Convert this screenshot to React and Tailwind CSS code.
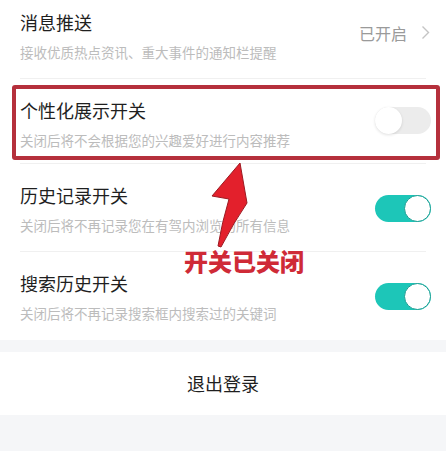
import React from 'react';

const font = { fontFamily: '"Noto Sans CJK SC", "Noto Sans", sans-serif' };

const Toggle = ({ on }) => (
  <div
    className={`relative h-[27px] w-[56px] shrink-0 rounded-full ${on ? 'bg-[#1dc6b8]' : 'bg-[#ececec]'}`}
  >
    <div
      className={`absolute top-0 h-[27px] w-[27px] rounded-full bg-white ${
        on ? 'right-0 border border-[#1a9e93]' : 'left-0 shadow-[0_1px_3px_rgba(0,0,0,0.12)]'
      }`}
    />
  </div>
);

const Row = ({ title, desc, right, className = '', divider = true }) => (
  <div className={`flex flex-col ${className}`}>
    <div className="flex items-center pl-5 pr-[15px]">
      <div className="flex-1">
        <div className="text-[18px] leading-[24px] text-[#1f1f1f]">{title}</div>
        <div className="mt-[9px] text-[13.5px] leading-[18px] text-[#bcbcbc]">{desc}</div>
      </div>
      {right}
    </div>
    {divider && <div className="mx-5 mt-auto h-px bg-[#f0f0f0]" />}
  </div>
);

export default function App() {
  return (
    <div className="relative h-[451px] w-full overflow-hidden bg-[#f5f6f8]" style={font}>
      <div className="bg-white">
        <Row
          className="h-[79px] pt-[10px]"
          title="消息推送"
          desc="接收优质热点资讯、重大事件的通知栏提醒"
          right={
            <div className="-mt-[6px] flex items-center gap-[14px] pr-[1px]">
              <span className="text-[16px] text-[#9a9a9a]">已开启</span>
              <svg width="9" height="15" viewBox="0 0 9 15" fill="none">
                <path d="M1.5 1.5 L7.5 7.5 L1.5 13.5" stroke="#c4c4c4" strokeWidth="1.4" />
              </svg>
            </div>
          }
        />
        <Row
          className="h-[85px] pt-[19px]"
          title="个性化展示开关"
          desc="关闭后将不会根据您的兴趣爱好进行内容推荐"
          right={<div className="-mt-[6px]"><Toggle on={false} /></div>}
        />
        <Row
          className="h-[88px] pt-[19px]"
          title="历史记录开关"
          desc="关闭后将不再记录您在有驾内浏览的所有信息"
          right={<Toggle on />}
        />
        <Row
          className="h-[88px] pt-[19px]"
          title="搜索历史开关"
          desc="关闭后将不再记录搜索框内搜索过的关键词"
          right={<Toggle on />}
          divider={false}
        />
      </div>

      <div className="mt-[12px] flex h-[63px] items-center justify-center bg-white">
        <span className="text-[18px] text-[#1f1f1f]">退出登录</span>
      </div>

      {/* annotation: frame around the switched-off row */}
      <div className="pointer-events-none absolute left-[12px] top-[85px] h-[75px] w-[428px] rounded-[3px] border-4 border-[#b5303c]" />

      {/* annotation: arrow pointing at the frame */}
      <svg className="pointer-events-none absolute left-0 top-0" width="446" height="451">
        <path
          d="M240 163 L247 203 Q234 222 221 247 L218 246 Q222 222 229 199 L212 196 Z"
          fill="#e3202c"
          stroke="#9c1a22"
          strokeWidth="1"
          strokeLinejoin="round"
        />
      </svg>

      <div
        className="pointer-events-none absolute left-[184px] top-[246px] text-[24px] font-black leading-[30px] text-[#cf2a37]"
        style={{ textShadow: '0 0 2px #fff, 0 0 3px #fff' }}
      >
        开关已关闭
      </div>
    </div>
  );
}
